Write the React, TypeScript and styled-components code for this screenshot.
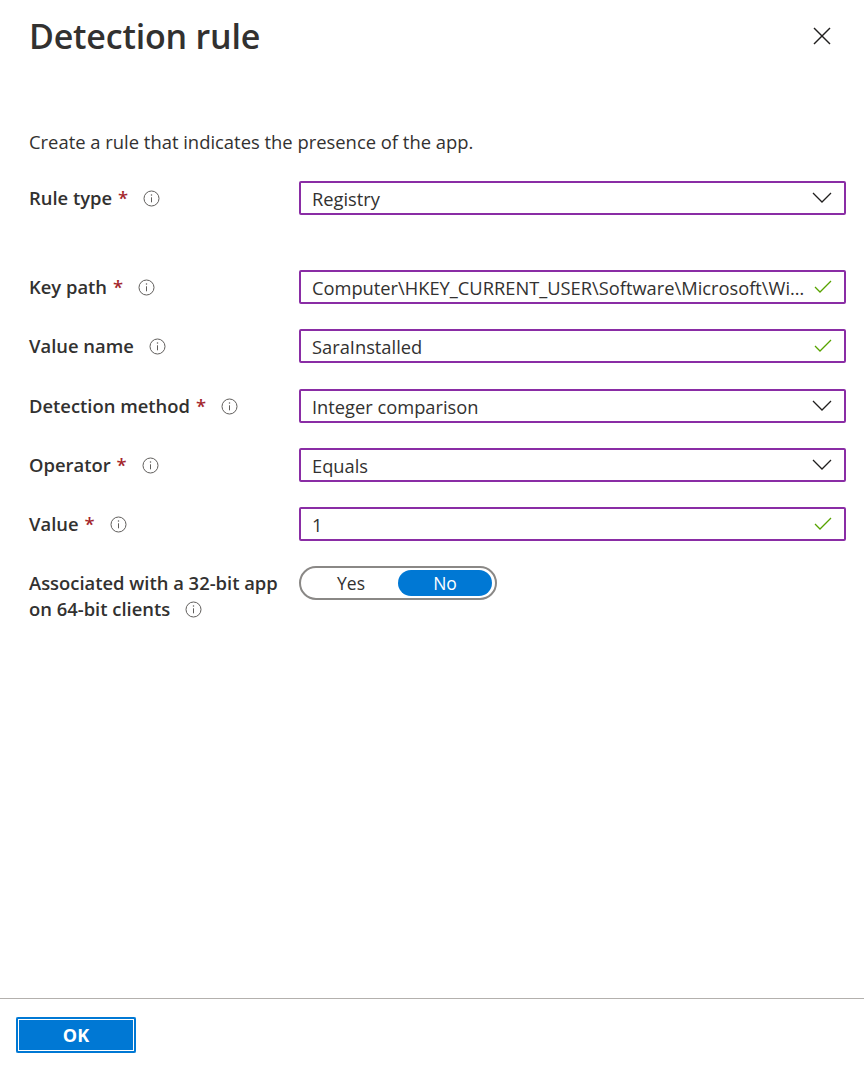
import React from "react";
import styled, { createGlobalStyle } from "styled-components";

const Global = createGlobalStyle`
  html, body { margin: 0; padding: 0; background: #fff; }
  body { font-family: "Open Sans", "Noto Sans", sans-serif; color: #323130; }
  * { box-sizing: border-box; }
`;

const Page = styled.div`
  display: flex;
  flex-direction: column;
  min-height: 100vh;
`;

const Body = styled.div`
  flex: 1;
  padding: 8px 18px 0 29px;
`;

const Header = styled.div`
  display: flex;
  justify-content: space-between;
  align-items: flex-start;
`;

const Title = styled.h1`
  margin: 0;
  font-size: 34px;
  font-weight: 600;
  line-height: 56px;
  color: #323130;
  letter-spacing: -0.2px;
`;

const Close = styled.button`
  border: none;
  background: none;
  padding: 0;
  margin: 11px 7px 0 0;
  width: 34px;
  height: 34px;
  display: flex;
  align-items: center;
  justify-content: center;
  cursor: pointer;
`;

const Description = styled.p`
  margin: 66px 0 0 0;
  font-size: 18.4px;
  line-height: 24px;
  color: #323130;
`;

const Form = styled.div`
  margin-top: 27px;
  display: flex;
  flex-direction: column;
`;

const Row = styled.div<{ $gap: number; $top?: boolean }>`
  display: grid;
  grid-template-columns: 270px minmax(0, 1fr);
  align-items: ${(p) => (p.$top ? "start" : "center")};
  margin-bottom: ${(p) => p.$gap}px;
`;

const Label = styled.div`
  font-size: 18.4px;
  font-weight: 600;
  line-height: 26px;
  color: #323130;
  display: flex;
  align-items: center;
`;

const MultiLabel = styled.div`
  font-size: 18.4px;
  font-weight: 600;
  line-height: 26px;
  padding-top: 4px;
  color: #323130;
`;

const Star = styled.span`
  color: #a4262c;
  margin-left: 6px;
`;

const InfoWrap = styled.span`
  display: inline-flex;
  margin-left: 15px;
  vertical-align: -2px;
`;

const Field = styled.div`
  height: 34px;
  border: 2px solid #8a2da5;
  border-radius: 2px;
  display: flex;
  align-items: center;
  padding: 0 12px 0 11px;
  font-size: 18.3px;
  color: #323130;
  min-width: 0;
`;

const FieldText = styled.span`
  flex: 1;
  min-width: 0;
  white-space: nowrap;
  overflow: hidden;
  text-overflow: ellipsis;
`;

const Suffix = styled.span`
  display: inline-flex;
  flex-shrink: 0;
  margin-left: 4px;
`;

const Toggle = styled.div`
  width: 198px;
  height: 34px;
  border: 2px solid #8a8886;
  border-radius: 17px;
  display: grid;
  grid-template-columns: 1fr 1fr;
  padding: 3px;
  font-size: 17.5px;
`;

const ToggleOption = styled.div<{ $active?: boolean }>`
  display: flex;
  align-items: center;
  justify-content: center;
  border-radius: 13px;
  background: ${(p) => (p.$active ? "#0078d4" : "transparent")};
  color: ${(p) => (p.$active ? "#fff" : "#323130")};
  margin: -1px 0;
`;

const Footer = styled.div`
  border-top: 1px solid #b3b0ad;
  height: 77px;
  padding: 18px 16px;
`;

const OkButton = styled.button`
  width: 120px;
  height: 36px;
  border: none;
  border-radius: 2px;
  background: #0078d4;
  color: #fff;
  font-family: "Open Sans", "Noto Sans", sans-serif;
  font-weight: 700;
  font-size: 18px;
  box-shadow: inset 0 0 0 2px #0078d4, inset 0 0 0 3px #fff;
  cursor: pointer;
`;

const Info = () => (
  <InfoWrap>
    <svg width="17" height="17" viewBox="0 0 17 17" fill="none">
      <circle cx="8.5" cy="8.5" r="7.5" stroke="#605e5c" strokeWidth="1" />
      <line x1="8.5" y1="7.3" x2="8.5" y2="12.3" stroke="#605e5c" strokeWidth="1" />
      <circle cx="8.5" cy="5" r="0.75" fill="#605e5c" />
    </svg>
  </InfoWrap>
);

const Chevron = () => (
  <Suffix>
    <svg width="20" height="12" viewBox="0 0 20 12" fill="none">
      <polyline points="1,1 10,10 19,1" stroke="#201f1e" strokeWidth="1.3" />
    </svg>
  </Suffix>
);

const Check = () => (
  <Suffix>
    <svg width="18" height="14" viewBox="0 0 18 14" fill="none">
      <polyline points="1,7 6,12 17,1" stroke="#57a300" strokeWidth="1.3" />
    </svg>
  </Suffix>
);

type FieldRow = {
  label: string;
  required: boolean;
  value: string;
  suffix: "chevron" | "check";
  gap: number;
};

const rows: FieldRow[] = [
  { label: "Rule type", required: true, value: "Registry", suffix: "chevron", gap: 55 },
  {
    label: "Key path",
    required: true,
    value: "Computer\\HKEY_CURRENT_USER\\Software\\Microsoft\\Windows\\CurrentVersion",
    suffix: "check",
    gap: 25,
  },
  { label: "Value name", required: false, value: "SaraInstalled", suffix: "check", gap: 26 },
  { label: "Detection method", required: true, value: "Integer comparison", suffix: "chevron", gap: 25 },
  { label: "Operator", required: true, value: "Equals", suffix: "chevron", gap: 25 },
  { label: "Value", required: true, value: "1", suffix: "check", gap: 25 },
];

export default function App() {
  return (
    <Page>
      <Global />
      <Body>
        <Header>
          <Title>Detection rule</Title>
          <Close aria-label="Close">
            <svg width="18" height="18" viewBox="0 0 18 18" fill="none">
              <line x1="1" y1="1" x2="17" y2="17" stroke="#201f1e" strokeWidth="1.4" />
              <line x1="17" y1="1" x2="1" y2="17" stroke="#201f1e" strokeWidth="1.4" />
            </svg>
          </Close>
        </Header>
        <Description>Create a rule that indicates the presence of the app.</Description>
        <Form>
          {rows.map((r) => (
            <Row key={r.label} $gap={r.gap}>
              <Label>
                {r.label}
                {r.required && <Star>*</Star>}
                <Info />
              </Label>
              <Field>
                <FieldText>{r.value}</FieldText>
                {r.suffix === "chevron" ? <Chevron /> : <Check />}
              </Field>
            </Row>
          ))}
          <Row $gap={0} $top>
            <MultiLabel>
              Associated with a 32-bit app
              <br />
              on 64-bit clients
              <Info />
            </MultiLabel>
            <Toggle>
              <ToggleOption>Yes</ToggleOption>
              <ToggleOption $active>No</ToggleOption>
            </Toggle>
          </Row>
        </Form>
      </Body>
      <Footer>
        <OkButton>OK</OkButton>
      </Footer>
    </Page>
  );
}
